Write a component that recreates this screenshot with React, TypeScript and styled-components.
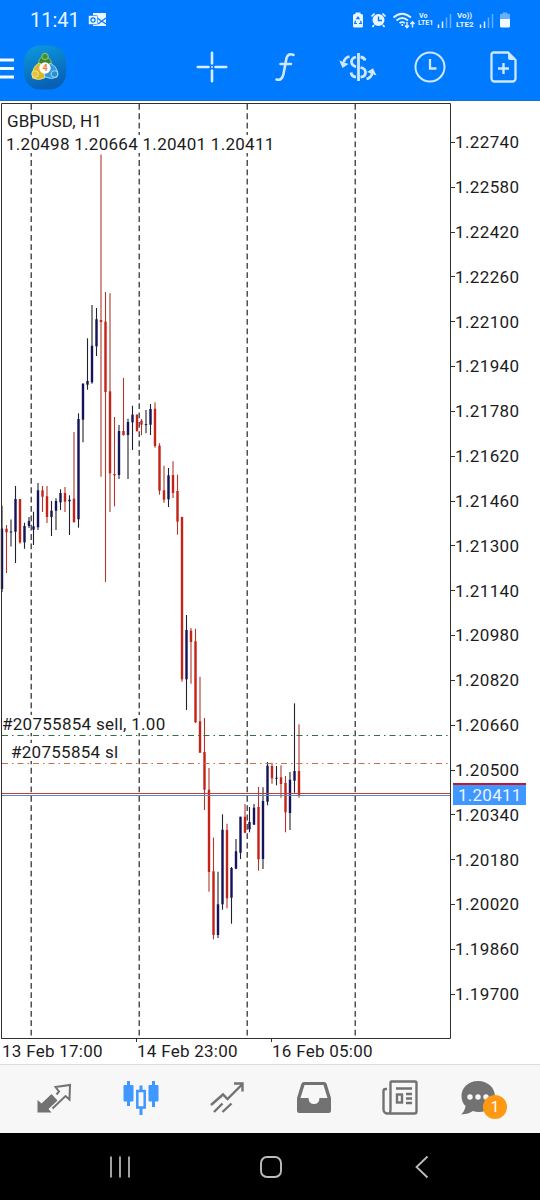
import React from 'react';
import styled, { createGlobalStyle } from 'styled-components';

const Global = createGlobalStyle`
  * { box-sizing: border-box; }
  body { margin: 0; background: #fff; font-family: Roboto, "Liberation Sans", sans-serif; }
`;

const Screen = styled.div`
  width: 540px;
  height: 1200px;
  display: flex;
  flex-direction: column;
  overflow: hidden;
  background: #fff;
`;

const Header = styled.header`
  height: 101px;
  flex: none;
  background: #007aff;
  border-bottom: 1px solid #1a6fd0;
  display: flex;
  flex-direction: column;
`;

const StatusBar = styled.div`
  height: 40px;
  padding: 0 28px 0 30px;
  display: flex;
  align-items: center;
  justify-content: space-between;
`;

const StatusGroup = styled.div`
  display: flex;
  align-items: center;
`;

const StatusItem = styled.div<{ $before?: number }>`
  margin-left: ${(p) => p.$before ?? 0}px;
  svg { display: block; }
`;

const Clock = styled.span`
  font-size: 20px;
  line-height: 40px;
  color: #e9f5ff;
  letter-spacing: 0px;
`;

const Network = styled.div<{ $size: number; $width: number; $line: number }>`
  width: ${(p) => p.$width}px;
  display: flex;
  flex-direction: column;
  color: #e4f2ff;
  font-size: ${(p) => p.$size}px;
  line-height: ${(p) => p.$line}px;
  font-weight: 700;
  white-space: nowrap;
  span:first-child { padding-left: 1px; }
`;

const Toolbar = styled.div`
  height: 54px;
  display: flex;
  align-items: center;
  svg { display: block; flex: none; }
`;

const AppMark = styled.div`
  margin-left: 9px;
  width: 44px;
  height: 45px;
`;

const Tools = styled.div`
  display: flex;
  margin-left: 109px;
`;

const Tool = styled.div`
  width: 72.7px;
  display: flex;
  justify-content: center;
`;

const ChartArea = styled.main`
  height: 937px;
  flex: none;
  display: flex;
  margin-top: 2px;
  position: relative;
`;

const Plot = styled.div`
  width: 451px;
  height: 937px;
  flex: none;
  svg { display: block; }
`;

const PriceAxis = styled.div`
  flex: 1;
  padding-top: 28.3px;
  display: flex;
  flex-direction: column;
`;

const Price = styled.div`
  height: 44.83px;
  flex: none;
  display: flex;
  align-items: flex-start;
  color: #1c1c1c;
  font-size: 17px;
  line-height: 22px;
  letter-spacing: 0.38px;
  &::before {
    content: '';
    width: 4px;
    height: 1px;
    margin-top: 10.7px;
    background: #333;
  }
`;

const PriceTag = styled.div`
  position: absolute;
  left: 453px;
  top: 680px;
  width: 73px;
  height: 22px;
  border-top: 2px solid #c4162c;
  background: #3f97ff;
  color: #e9f4ff;
  font-size: 17px;
  line-height: 21px;
  letter-spacing: 0.25px;
  padding-left: 5px;
`;

const ChartLabel = styled.div<{ $x: number; $y: number; $clear?: boolean }>`
  position: absolute;
  left: ${(p) => p.$x}px;
  top: ${(p) => p.$y}px;
  color: #1c1c1c;
  background: ${(p) => (p.$clear ? 'transparent' : '#fff')};
  font-size: 17px;
  line-height: 18px;
  letter-spacing: ${(p) => (p.$clear ? 0.15 : 0.28)}px;
  white-space: pre;
`;

const TimeAxis = styled.div`
  height: 24px;
  flex: none;
  display: flex;
  padding-left: 2px;
`;

const TimeLabel = styled.span`
  width: 135px;
  color: #1c1c1c;
  font-size: 17px;
  line-height: 23px;
  letter-spacing: 0.27px;
  white-space: nowrap;
`;

const TabBar = styled.nav`
  height: 69px;
  flex: none;
  background: #f7f7f7;
  border-top: 1px solid #dcdcdc;
  display: flex;
  justify-content: space-between;
  align-items: center;
  padding: 0 10px 3px 11px;
`;

const Tab = styled.div<{ $badged?: boolean }>`
  width: 86.5px;
  display: flex;
  justify-content: center;
  padding-right: ${(p) => (p.$badged ? 18 : 0)}px;
  position: relative;
  svg { display: block; }
`;

const Badge = styled.span`
  position: absolute;
  left: 39.5px;
  top: 14.5px;
  width: 24px;
  height: 24px;
  border-radius: 50%;
  background: #ff9914;
  color: #fff;
  font-size: 15px;
  line-height: 24px;
  text-align: center;
`;

const SystemNav = styled.footer`
  flex: 1;
  background: #000;
  display: flex;
  align-items: center;
  padding-left: 44px;
`;

const NavKey = styled.div`
  width: 151px;
  display: flex;
  justify-content: center;
`;

type Candle = [number, number, number, number, 0 | 1];

/* high, body top, body bottom, low, direction (1 = rising) */
const candles: Candle[] = [
  [505.7, 528.5, 589, 592, 1], [525, 528.7, 532.3, 573, 0], [519.5, 531.5, 532.5, 546.5, 1],
  [486, 499, 531.7, 563, 1], [499, 499, 542.3, 543.7, 0], [522.7, 526, 542.3, 548.7, 1],
  [517, 521, 526, 528, 1], [511.7, 526.3, 529.7, 545, 1], [483, 490.3, 527.3, 530, 1],
  [486, 490.3, 496.7, 512, 0], [486, 496.3, 517, 523, 0], [501, 510.7, 517, 536, 1],
  [498.3, 501, 510.7, 530, 1], [489.3, 493, 502.3, 510, 1], [487, 493, 501.7, 512, 0],
  [495.3, 499.7, 501.3, 535, 1], [432, 498.7, 522.3, 522.3, 0], [413.3, 419, 519.3, 527.7, 1],
  [383.3, 383.7, 419.7, 442.3, 1], [338.3, 381, 384.7, 389.7, 1], [305, 345.7, 382.3, 383.7, 1],
  [308, 319.3, 346.3, 356, 1], [154.5, 320, 322, 476.7, 0], [292, 321.7, 392, 582, 0],
  [293.3, 391.3, 473.3, 512, 0], [417, 474, 475.3, 506.3, 0], [425, 431, 475, 479, 1],
  [378, 431, 435, 435.7, 0], [418.7, 422, 435, 479, 1], [405.7, 414.7, 422.3, 450, 1],
  [414.3, 414.7, 431, 431.7, 0], [419, 420.7, 424.7, 435.3, 0], [410, 424, 424.9, 433.3, 1],
  [404, 409, 424.7, 435, 1], [402.3, 408.7, 446, 447.7, 0], [443.3, 445.7, 490.7, 494.7, 0],
  [465.7, 490.3, 499.7, 502.7, 0], [468, 475.3, 499.3, 507, 1], [461.3, 475, 493, 498, 0],
  [474.7, 491, 521.7, 534.7, 0], [516.7, 517, 679.3, 681.7, 0], [615, 630, 679.3, 710, 1],
  [628, 630.7, 642, 683.7, 0], [628.7, 641.3, 722.3, 723, 0], [676.7, 721.3, 752.7, 752.7, 0],
  [718, 752, 789.7, 810, 0], [768, 789.7, 872, 891.7, 0], [837.7, 871.3, 935, 939.3, 0],
  [871.7, 904.3, 935, 938, 1], [814.3, 829.7, 904.3, 909.7, 1], [823.7, 830, 898.3, 908.3, 0],
  [867, 868, 897.7, 923.7, 1], [839, 851.3, 868.7, 869.3, 1], [816.7, 816.7, 852.7, 859, 1],
  [804, 816.7, 832.7, 833.3, 0], [807, 822, 829.3, 832.3, 1], [804, 807.7, 824.7, 824.7, 1],
  [787, 807, 859.3, 870.7, 0], [787.3, 801, 859, 869, 1], [762, 765.7, 801.7, 805.3, 1],
  [762.7, 766, 778.3, 783.7, 0], [766, 777.7, 778.7, 785.3, 1], [765.3, 777.3, 784, 797.7, 0],
  [776, 783, 812.3, 832.3, 0], [772, 779.7, 813, 830, 1], [703.3, 771, 780.7, 792.7, 1],
  [724.3, 771, 795.3, 797.7, 0],
];

const prices = [
  '1.22740', '1.22580', '1.22420', '1.22260', '1.22100', '1.21940', '1.21780', '1.21620',
  '1.21460', '1.21300', '1.21140', '1.20980', '1.20820', '1.20660', '1.20500', '1.20340',
  '1.20180', '1.20020', '1.19860', '1.19700',
];

const dayLines = [31.2, 139.2, 247.2, 355.2];

function CandleChart() {
  return (
    <svg width="451" height="940" viewBox="0 103 451 940" overflow="visible">
      {dayLines.map((x) => (
        <path key={x} d={`M${x} 104V1039`} stroke="#262626" strokeWidth="1.2" strokeDasharray="5.8 3.55" />
      ))}
      {candles.map(([high, top, bottom, low, up], i) => {
        const x = 2 + i * 4.5;
        return (
          <g key={i}>
            <path d={`M${x} ${high}V${low}`} stroke={up ? '#22222e' : '#ad382c'} strokeWidth="1.1" />
            <path d={`M${x} ${top}V${bottom}`} stroke={up ? '#14145a' : '#c42317'} strokeWidth="2.4" />
          </g>
        );
      })}
      <path d="M2 735.5H450" stroke="#2f7040" strokeDasharray="6 4 1.5 4" />
      <path d="M2 763.5H450" stroke="#c46f4e" strokeDasharray="6 4 1.5 4" />
      <path d="M2 793.5H450" stroke="#c8383c" />
      <path d="M2 795.5H450" stroke="#5c88b8" />
      <path d="M1.5 1039V103.5H450.5V1038.5H1.5" fill="none" stroke="#303030" />
      <path d="M136.500 1039V1042M271.500 1039V1042" stroke="#303030" />
    </svg>
  );
}

const ice = '#cfe8ff';

function Signal() {
  return (
    <svg width="15" height="15" viewBox="0 0 15 15" strokeWidth="1.5">
      <path d="M1.500 15V11.500M5.500 15V8.500" stroke="#e4f2ff" />
      <path d="M9.500 15V4.500M13.500 15V1" stroke="#66b0ff" />
    </svg>
  );
}

function MetaTraderLogo() {
  return (
    <svg width="44" height="45" viewBox="0 0 44 45">
      <defs>
        <linearGradient id="tile" x1="0" y1="0" x2="0.3" y2="1">
          <stop offset="0" stopColor="#0d9ade" />
          <stop offset="1" stopColor="#0761b4" />
        </linearGradient>
      </defs>
      <rect x="1" y="0.500" width="42" height="44" rx="16" fill="url(#tile)" />
      <path d="M15.500 22q-1-8 4-10.500 2-1 4 0 6 3 5 10.500l-4 2h-5z" fill="#37872f" stroke="#a7c77d" strokeWidth="0.8" />
      <circle cx="22" cy="11.500" r="3.300" fill="#3f9436" stroke="#b2cf85" strokeWidth="0.8" />
      <path d="M17 18q-6 2-7 8-1 5-.5 7 6 3 12 0l1-5z" fill="#d8b72f" stroke="#f3e58b" strokeWidth="0.8" />
      <circle cx="12" cy="29" r="3.300" fill="#e4c338" stroke="#f7ec9c" strokeWidth="0.8" />
      <path d="M27 18q6 3 7.500 8 1 4-.5 6-5 3-12 0l-1-5z" fill="#3499d9" stroke="#b4e4ff" strokeWidth="0.8" />
      <circle cx="31.500" cy="29" r="3.300" fill="#2b8ed2" stroke="#b4e4ff" strokeWidth="0.8" />
      <circle cx="22" cy="23" r="5.700" fill="#fff" />
      <text x="22" y="26.300" fontSize="9" fontWeight="700" textAnchor="middle" fill="#ed8630">4</text>
    </svg>
  );
}

export default function App() {
  return (
    <>
      <Global />
      <Screen>
        <Header>
          <StatusBar>
            <StatusGroup>
              <Clock>11:41</Clock>
              <StatusItem $before={8}>
                <svg width="19" height="16" viewBox="0 0 19 16">
                  <path d="M5 1h13v13H5z" fill="#e9f5ff" />
                  <path d="M9 6l9 6M18 6l-8 6" stroke="#007aff" strokeWidth="1.2" />
                  <rect x="0.500" y="3.500" width="9" height="9" rx="1" fill="#e9f5ff" stroke="#007aff" strokeWidth="0.6" />
                  <circle cx="5" cy="8" r="2.100" fill="none" stroke="#007aff" strokeWidth="1.2" />
                </svg>
              </StatusItem>
            </StatusGroup>
            <StatusGroup>
              <StatusItem>
                <svg width="12" height="16" viewBox="0 0 12 16">
                  <path d="M3.500 2V.5h5V2h1A1.500 1.500 0 0 1 11 3.500V14a1.500 1.500 0 0 1-1.500 1.500h-7A1.500 1.500 0 0 1 1 14V3.500A1.500 1.500 0 0 1 2.500 2z" fill="#e9f5ff" />
                  <path d="M4.500 7.300L6 5l1.500 2.300M8.500 8.800L9.300 11.500H7M5 11.500H2.700L3.600 8.800" fill="none" stroke="#007aff" strokeWidth="1.2" />
                </svg>
              </StatusItem>
              <StatusItem $before={6}>
                <svg width="17" height="16" viewBox="0 0 17 16">
                  <circle cx="8.500" cy="8" r="6" fill="#e9f5ff" />
                  <path d="M1.500 4.500L4.500 1.500M15.500 4.500L12.500 1.500M4 13l-1.500 2M13 13l1.500 2" stroke="#e9f5ff" strokeWidth="1.7" />
                  <path d="M8.500 4.500V8.500H12" fill="none" stroke="#007aff" strokeWidth="1.4" />
                </svg>
              </StatusItem>
              <StatusItem $before={5}>
                <svg width="24" height="17" viewBox="0 0 24 17" fill="none" stroke="#e4f2ff" strokeWidth="1.7">
                  <path d="M1.500 5.500Q10 -2 19 5.500M4.500 8.500Q10.200 3.500 16 8.500M7.500 11.200Q10.200 9 13 11.200" />
                  <path d="M10.300 12v2" />
                  <path d="M15 10v5.500M13 13.500l2 2.200 2-2.200M20.500 15.500v-5.500M18.500 12l2-2.200 2 2.200" strokeWidth="1.4" />
                </svg>
              </StatusItem>
              <StatusItem $before={2}>
                <Network $size={7} $width={16} $line={7.5}><span>Vo</span><span>LTE1</span></Network>
              </StatusItem>
              <StatusItem $before={3}><Signal /></StatusItem>
              <StatusItem $before={4}>
                <Network $size={8} $width={20} $line={9.2}><span>Vo))</span><span>LTE2</span></Network>
              </StatusItem>
              <StatusItem $before={3}><Signal /></StatusItem>
              <StatusItem $before={4}>
                <svg width="14" height="16" viewBox="0 0 14 16">
                  <path d="M4.500 2V.5h5V2H12v5H2V2z" fill="#66b0ff" />
                  <path d="M2 7h10v7a1.500 1.500 0 0 1-1.500 1.500h-7A1.500 1.500 0 0 1 2 14z" fill="#f2f9ff" />
                </svg>
              </StatusItem>
            </StatusGroup>
          </StatusBar>
          <Toolbar>
            <svg width="14" height="24" viewBox="0 0 14 24">
              <path d="M0 5H14M0 13.500H14M0 22H14" stroke="#f4faff" strokeWidth="3" />
            </svg>
            <AppMark><MetaTraderLogo /></AppMark>
            <Tools>
              <Tool>
                <svg width="32" height="32" viewBox="0 0 32 32" stroke="#d9edff" strokeWidth="2.6" strokeLinecap="round">
                  <path d="M16 1.800V12.500M16 19.500V30.200M1.800 16H12.500M19.500 16H30.200" />
                  <path d="M16 16h.01" strokeWidth="2" />
                </svg>
              </Tool>
              <Tool>
                <svg width="22" height="32" viewBox="0 0 22 32" fill="none" stroke={ice} strokeWidth="2.6" strokeLinecap="round">
                  <path d="M19.500 4Q14.500 1.500 12.500 7L9.500 23Q8 30 2.500 28.500M6.500 13H17" />
                </svg>
              </Tool>
              <Tool>
                <svg width="38" height="32" viewBox="0 0 38 32" fill="none" stroke={ice}>
                  <path d="M19.500 2V30" strokeWidth="2.8" />
                  <path d="M26 9.500Q25.500 6.500 21.500 6M17 6Q12.500 7 12.500 10.800 12.500 14.500 17 15.800M21.500 16.500Q26.500 17.500 26.500 21.500 26.500 25.500 21.500 26.200M17 26.200Q12.500 25.500 12 21.500" strokeWidth="2.8" />
                  <path d="M10.500 5.500Q6 6.500 4.800 11M27.500 28Q32 27 33.300 22" strokeWidth="2.8" />
                  <path d="M0.300 9.500L9.500 13 3.500 17zM28 21L34 17.300 37.500 24.500z" fill={ice} stroke="none" />
                </svg>
              </Tool>
              <Tool>
                <svg width="32" height="32" viewBox="0 0 32 32" fill="none" stroke={ice}>
                  <circle cx="16" cy="16" r="14.500" strokeWidth="2" />
                  <path d="M16 8V17.500H22.500" strokeWidth="2.3" />
                </svg>
              </Tool>
              <Tool>
                <svg width="27" height="32" viewBox="0 0 27 32" fill="none" stroke={ice}>
                  <path d="M3.500 1.500H18L25.500 9V27.500a3 3 0 0 1-3 3H4.500a3 3 0 0 1-3-3V3.500a2 2 0 0 1 2-2z" strokeWidth="2.3" />
                  <path d="M18 1L26 9H20a2 2 0 0 1-2-2z" fill={ice} stroke="none" />
                  <path d="M13.500 12V23M8 17.500H19" strokeWidth="2.4" />
                </svg>
              </Tool>
            </Tools>
          </Toolbar>
        </Header>

        <ChartArea>
          <Plot><CandleChart /></Plot>
          <PriceAxis>
            {prices.map((p) => <Price key={p}>{p}</Price>)}
          </PriceAxis>
          <ChartLabel $x={7} $y={9} $clear>GBPUSD, H1</ChartLabel>
          <ChartLabel $x={6} $y={32}>1.20498 1.20664 1.20401 1.20411</ChartLabel>
          <ChartLabel $x={2} $y={612}>#20755854 sell, 1.00</ChartLabel>
          <ChartLabel $x={11} $y={640}>#20755854 sl</ChartLabel>
          <PriceTag>1.20411</PriceTag>
        </ChartArea>

        <TimeAxis>
          <TimeLabel>13 Feb 17:00</TimeLabel>
          <TimeLabel>14 Feb 23:00</TimeLabel>
          <TimeLabel>16 Feb 05:00</TimeLabel>
        </TimeAxis>

        <TabBar>
          <Tab>
            <svg width="36" height="32" viewBox="0 0 36 32">
              <path d="M1.500 30.500V18L5.500 21.500 15.500 12 21.500 18.500 12.500 27 15.500 30.500z" fill="#727272" />
              <path d="M20.500 12.500L23 9.500 19.500 5 34 3 33.500 17.500 29.500 14 16.500 26.500" fill="none" stroke="#727272" strokeWidth="2" />
            </svg>
          </Tab>
          <Tab>
            <svg width="36" height="36" viewBox="0 0 36 36">
              <path d="M5.500 1V26M30.500 1V27M18 5.500V11M18 27V35" stroke="#3f97ff" strokeWidth="3" />
              <rect x="0.500" y="5" width="10" height="16.500" rx="1" fill="#3f97ff" />
              <rect x="25.500" y="5" width="10" height="16.500" rx="1" fill="#3f97ff" />
              <rect x="14.300" y="11" width="7.400" height="16.500" fill="none" stroke="#3f97ff" strokeWidth="2.5" />
            </svg>
          </Tab>
          <Tab>
            <svg width="34" height="33" viewBox="0 0 34 33" fill="none" stroke="#727272" strokeWidth="2.4">
              <path d="M1 24L13 13.500 17.500 18 31.500 4M24 2.500H32.500V10.500M4 31L12.500 22.500M12.500 31L21.500 22.500" />
            </svg>
          </Tab>
          <Tab>
            <svg width="36" height="33" viewBox="0 0 36 33">
              <path d="M8 1H28Q30 1 30.700 3L35 17V29.500a2.500 2.500 0 0 1-2.500 2.500h-29A2.500 2.500 0 0 1 1 29.500V17L5.300 3Q6 1 8 1zM8.500 4L4.500 17H12.500Q12.800 23 18 23T23.500 17H31.500L27.500 4z" fill="#727272" fillRule="evenodd" />
            </svg>
          </Tab>
          <Tab>
            <svg width="36" height="35" viewBox="0 0 36 35" fill="none" stroke="#727272" strokeWidth="2.4">
              <path d="M9.500 1.500H33a1.500 1.500 0 0 1 1.500 1.500V31.500a2 2 0 0 1-2 2H5.500a4 4 0 0 1-4-4V11Q1.500 9 3.500 9H5M8 33Q8.500 31.500 8.500 29V2.500a1 1 0 0 1 1-1M14 8.500H30M24 14H30M24 18.500H30M24 23H30" />
              <rect x="15" y="14.500" width="5" height="8" />
            </svg>
          </Tab>
          <Tab $badged>
            <svg width="36" height="35" viewBox="0 0 36 35">
              <path d="M18 1C8 1 1.500 8 1.500 16q0 6 4 10Q5 31 1 34.500 9 34 13 31q2.500 1 6 1C28 32 35 25 35 16.500 35 8 28 1 18 1z" fill="#727272" />
              <path d="M10 17h.01M18 17h.01M26 17h.01" stroke="#f7f7f7" strokeWidth="5.4" strokeLinecap="round" />
            </svg>
            <Badge>1</Badge>
          </Tab>
        </TabBar>

        <SystemNav>
          <NavKey>
            <svg width="22" height="22" viewBox="0 0 22 22" stroke="#bdbdbd" strokeWidth="1.7">
              <path d="M2 .5V21.500M11 .5V21.500M20 .5V21.500" />
            </svg>
          </NavKey>
          <NavKey>
            <svg width="24" height="24" viewBox="0 0 24 24" fill="none" stroke="#bdbdbd" strokeWidth="1.9">
              <rect x="2" y="2" width="20" height="20" rx="6" />
            </svg>
          </NavKey>
          <NavKey>
            <svg width="16" height="24" viewBox="0 0 16 24" fill="none" stroke="#bdbdbd" strokeWidth="1.8">
              <path d="M13.500 1.500L2.500 12l11 10.500" />
            </svg>
          </NavKey>
        </SystemNav>
      </Screen>
    </>
  );
}
